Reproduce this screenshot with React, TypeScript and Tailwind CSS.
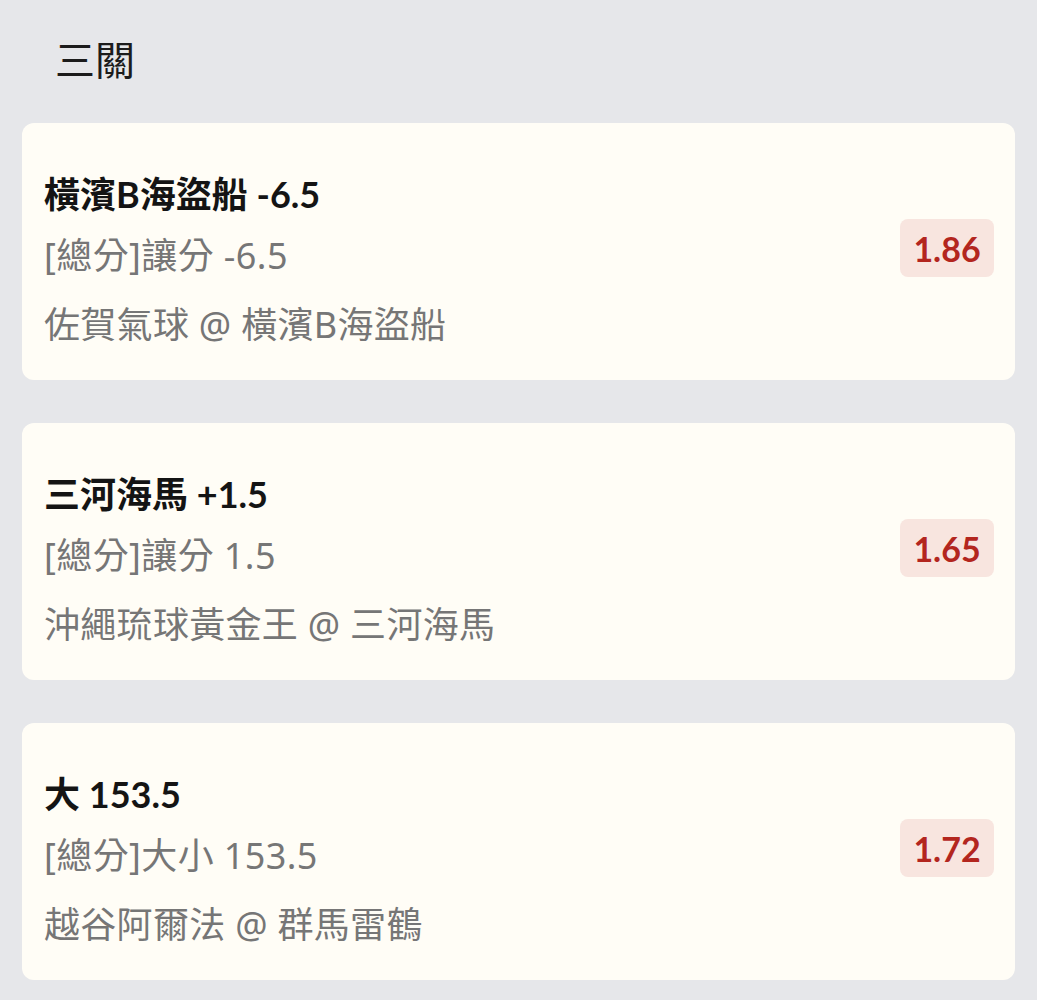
const bets = [
  {
    pick: '橫濱B海盜船 -6.5',
    market: '[總分]讓分 -6.5',
    match: '佐賀氣球 @ 橫濱B海盜船',
    odds: '1.86',
  },
  {
    pick: '三河海馬 +1.5',
    market: '[總分]讓分 1.5',
    match: '沖繩琉球黃金王 @ 三河海馬',
    odds: '1.65',
  },
  {
    pick: '大 153.5',
    market: '[總分]大小 153.5',
    match: '越谷阿爾法 @ 群馬雷鶴',
    odds: '1.72',
  },
]

export default function App() {
  return (
    <div
      className="min-h-[1000px] bg-[#e6e7ea] px-[22px] pt-[36px] pb-[20px] font-['Lato','Noto_Sans_CJK_TC',sans-serif]"
    >
      <h1 className="pl-[33px] text-[40px] leading-[48px] text-[#1c1c1c] font-normal">三關</h1>

      <div className="mt-[39px] flex flex-col gap-[43px]">
        {bets.map((bet, i) => (
          <div key={i} className="h-[257px] rounded-[12px] bg-[#fffdf6] pl-[22px] pr-[21px] flex justify-between">
            <div className="flex flex-col pt-[49px]">
              <div className="text-[36px] leading-[44px] font-bold text-[#141414]">{bet.pick}</div>
              <div className="mt-[18px] font-['Noto_Sans','Noto_Sans_CJK_TC',sans-serif] text-[36px] leading-[44px] tracking-[0.4px] text-[#767676]">{bet.market}</div>
              <div className="mt-[25px] font-['Noto_Sans','Noto_Sans_CJK_TC',sans-serif] text-[36px] leading-[44px] tracking-[0.3px] text-[#767676]">{bet.match}</div>
            </div>
            <div className="self-center mb-[7px] h-[58px] w-[94px] rounded-[8px] bg-[#f8e5df] flex items-center justify-center text-[34px] font-bold text-[#b3261e]">
              {bet.odds}
            </div>
          </div>
        ))}
      </div>
    </div>
  )
}
